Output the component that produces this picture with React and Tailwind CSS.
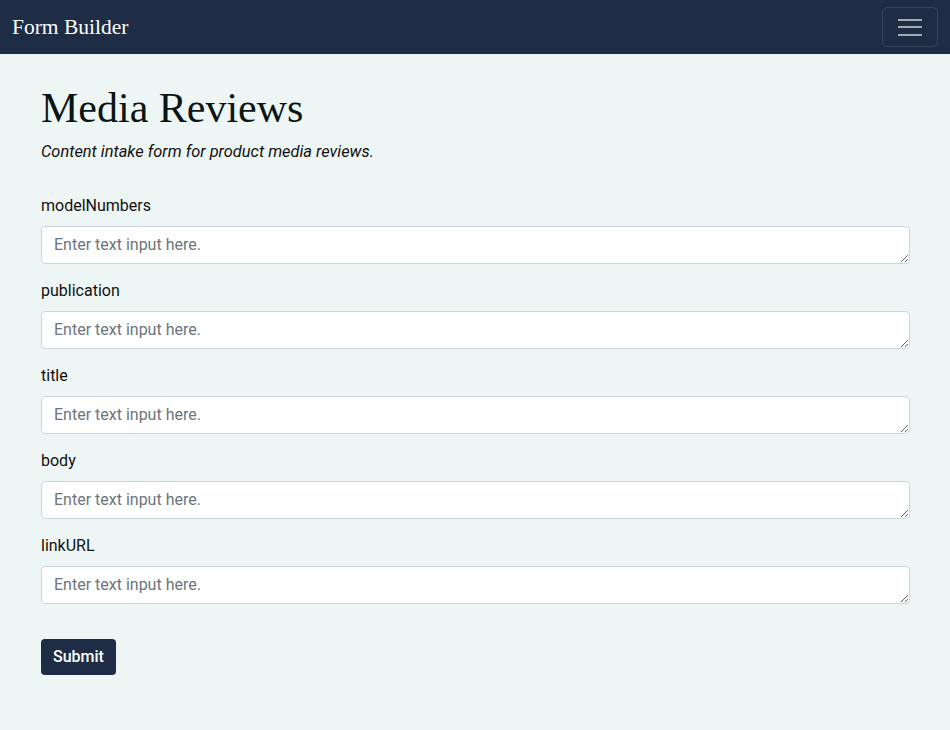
export default function App() {
  const fields = ["modelNumbers", "publication", "title", "body", "linkURL"];

  return (
    <div className="min-h-[730px] bg-[#eef6f5] font-['Roboto',sans-serif] text-[#111]">
      {/* Navbar */}
      <nav className="h-[54px] bg-[#1e2d45] flex items-center justify-between pl-3 pr-3">
        <span className="font-['Liberation_Serif',serif] text-[21.5px] text-white">Form Builder</span>
        <button className="w-[56px] h-[40px] rounded-[5px] border border-white/10 flex flex-col items-center justify-center gap-[5.5px]">
          <span className="block w-[24px] h-[2px] bg-[#a3a9b3]" />
          <span className="block w-[24px] h-[2px] bg-[#a3a9b3]" />
          <span className="block w-[24px] h-[2px] bg-[#a3a9b3]" />
        </button>
      </nav>

      <main className="pl-[41px] pr-[40px] pt-[28px] pb-[55px] w-full">
        <h1 className="font-['Liberation_Serif',serif] text-[42px] leading-[52px] text-[#0b1614]">Media Reviews</h1>
        <p className="italic text-[16.4px] leading-6 mt-[6px] text-[#111]">Content intake form for product media reviews.</p>

        <form className="mt-[30px]">
          {fields.map((f) => (
            <div key={f} className="mb-[15px]">
              <label className="block text-[16px] leading-6 mb-[8px]">{f}</label>
              <textarea
                rows={1}
                placeholder="Enter text input here."
                className="block w-full h-[38px] min-h-[38px] bg-white border border-[#ced4da] rounded-[4px] px-3 py-[6px] text-[16px] leading-6 placeholder:text-[#6c757d] outline-none resize-y"
              />
            </div>
          ))}
          <button
            type="button"
            className="mt-[20px] h-[36px] px-3 rounded-[4px] bg-[#1e2d45] text-white text-[16px] font-medium"
          >
            Submit
          </button>
        </form>
      </main>
    </div>
  );
}
